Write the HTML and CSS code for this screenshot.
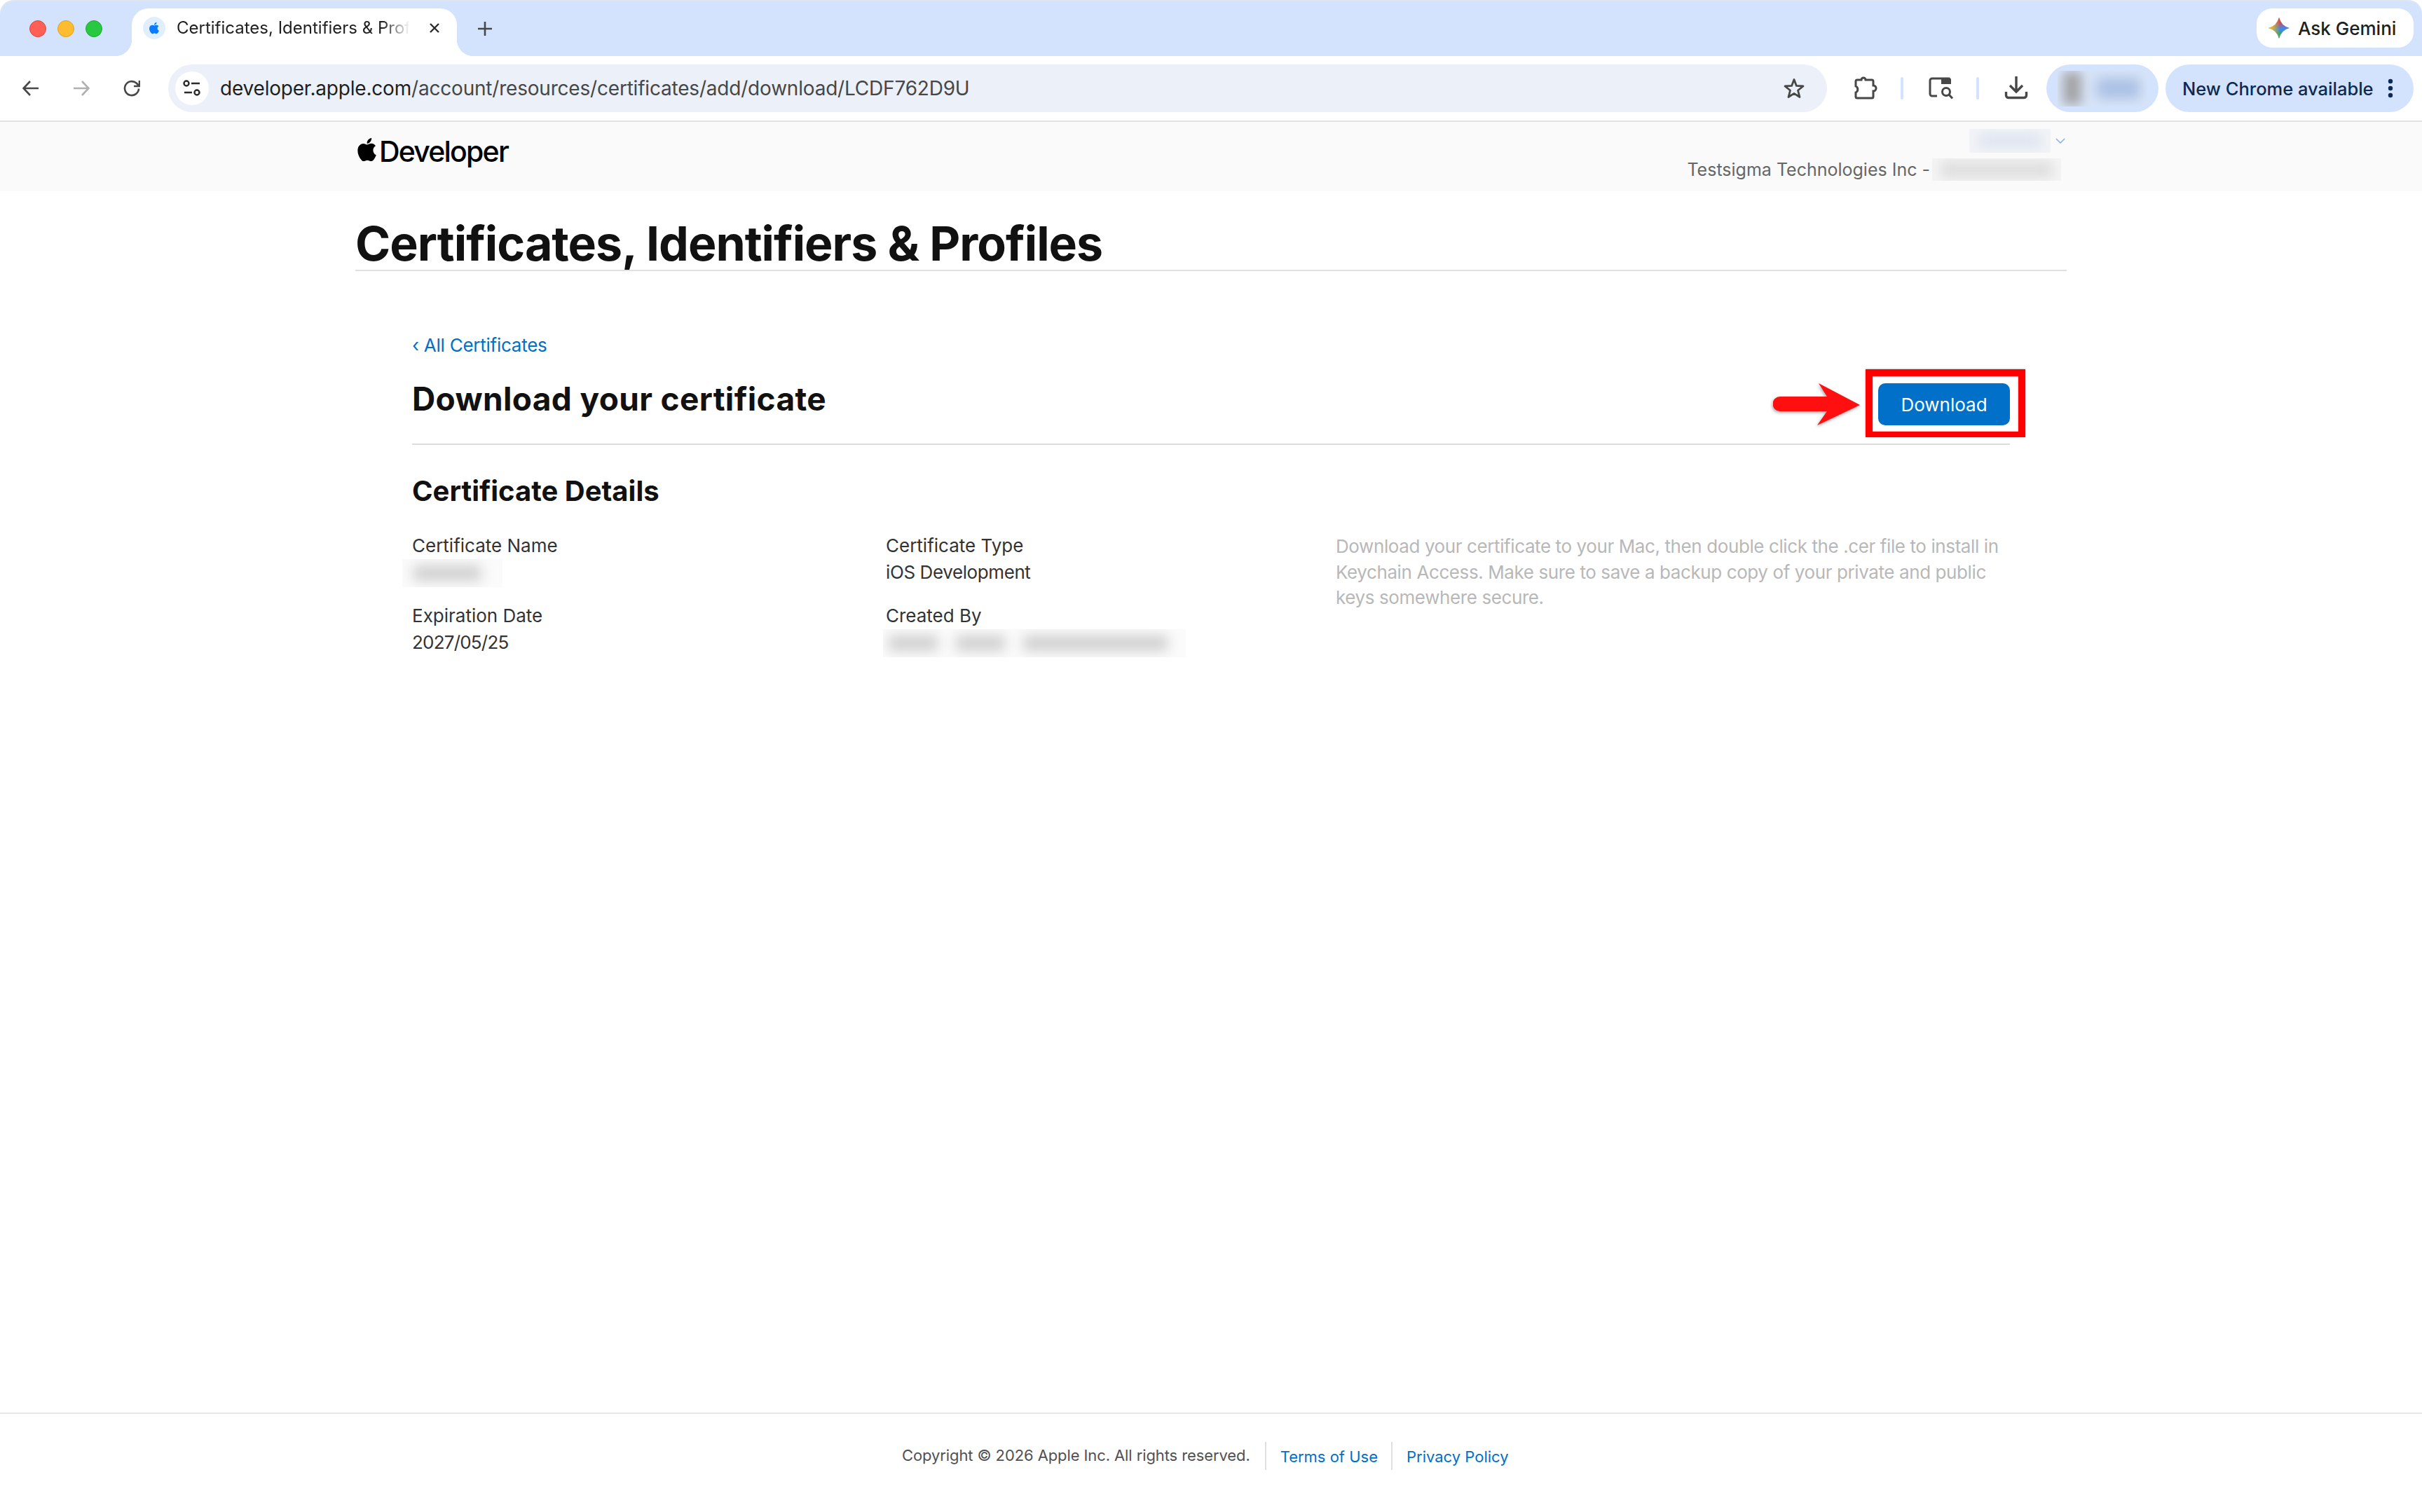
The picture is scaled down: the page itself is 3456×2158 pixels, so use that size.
FILE: index.html
```html
<!DOCTYPE html>
<html>
<head>
  <meta charset="UTF-8">
  <title>Certificates, Identifiers &amp; Profiles</title>
  <link rel="stylesheet" href="styles.css">
</head>
<body>
  <div class="window">
    <!-- Tab strip -->
    <div class="tabstrip">
      <div class="traffic">
        <span class="dot dot-red"></span>
        <span class="dot dot-yellow"></span>
        <span class="dot dot-green"></span>
      </div>
      <div class="tab">
        <span class="favicon">
          <svg viewBox="0 0 24 24" width="22" height="22"><path fill="#0a7cff" d="M17.05 20.28c-.98.95-2.05.8-3.08.35-1.09-.46-2.09-.48-3.24 0-1.44.62-2.2.44-3.06-.35C2.79 15.25 3.51 7.59 9.05 7.31c1.35.07 2.29.74 3.08.8 1.18-.24 2.31-.93 3.57-.84 1.51.12 2.65.72 3.4 1.8-3.12 1.87-2.38 5.98.48 7.13-.57 1.5-1.31 2.99-2.54 4.09zM12.03 7.25c-.15-2.23 1.66-4.07 3.74-4.25.29 2.58-2.34 4.5-3.74 4.25z"/></svg>
        </span>
        <span class="tab-title">Certificates, Identifiers &amp; Profiles</span>
        <svg class="tab-close" viewBox="0 0 16 16" width="16" height="16"><path d="M2 2 14 14M14 2 2 14" stroke="#2b2b2b" stroke-width="2.4" fill="none"/></svg>
      </div>
      <svg class="new-tab" viewBox="0 0 20 20" width="20" height="20"><path d="M10 0V20M0 10H20" stroke="#474747" stroke-width="2.6" fill="none"/></svg>
      <div class="gemini">
        <svg viewBox="0 0 30 30" width="30" height="30">
          <defs>
            <linearGradient id="gem-left" x1="0" y1="0" x2="1" y2="0">
              <stop offset="0.1" stop-color="#fbbc04"/>
              <stop offset="0.55" stop-color="#fbbc04" stop-opacity="0"/>
            </linearGradient>
            <linearGradient id="gem-top" x1="0" y1="0" x2="0" y2="1">
              <stop offset="0.15" stop-color="#ea4335"/>
              <stop offset="0.55" stop-color="#ea4335" stop-opacity="0"/>
            </linearGradient>
            <linearGradient id="gem-bottom" x1="0" y1="0" x2="0" y2="1">
              <stop offset="0.55" stop-color="#34a853" stop-opacity="0"/>
              <stop offset="0.85" stop-color="#34a853"/>
            </linearGradient>
          </defs>
          <path fill="#3a8bf7" d="M15 0Q18 12 30 15 18 18 15 30 12 18 0 15 12 12 15 0Z"/>
          <path fill="url(#gem-top)" d="M15 0Q18 12 30 15 18 18 15 30 12 18 0 15 12 12 15 0Z"/>
          <path fill="url(#gem-bottom)" d="M15 0Q18 12 30 15 18 18 15 30 12 18 0 15 12 12 15 0Z"/>
          <path fill="url(#gem-left)" d="M15 0Q18 12 30 15 18 18 15 30 12 18 0 15 12 12 15 0Z"/>
        </svg>
        <span>Ask Gemini</span>
      </div>
    </div>

    <!-- Toolbar -->
    <div class="toolbar">
      <div class="nav-btn">
        <svg viewBox="0 0 24 24" width="24" height="24"><path d="M23 12H2M11 2 1.500 12 11 22" stroke="#474747" stroke-width="2.600" fill="none"/></svg>
      </div>
      <div class="nav-btn">
        <svg viewBox="0 0 24 24" width="24" height="24"><path d="M1 12H22M13 2 22.500 12 13 22" stroke="#b0b0b0" stroke-width="2.600" fill="none"/></svg>
      </div>
      <div class="nav-btn">
        <svg viewBox="0 0 24 24" width="24" height="24"><path d="M22 12.500A10 10 0 1 1 18.500 4.500L22 8M23 1V9H15" stroke="#474747" stroke-width="2.600" fill="none"/></svg>
      </div>
      <div class="omnibox">
        <span class="site-info">
          <svg viewBox="0 0 26 24" width="26" height="24"><g stroke="#2b2b2b" stroke-width="2.400" fill="none"><circle cx="5" cy="5" r="3.500"/><path d="M12 5H24M2 18H13"/><circle cx="20" cy="18" r="3.500"/></g></svg>
        </span>
        <span class="url"><span class="url-host">developer.apple.com</span>/account/resources/certificates/add/download/LCDF762D9U</span>
        <svg class="bookmark" viewBox="0 0 32 32" width="32" height="32"><path d="M16 3.500 19.400 12.400 29 13 21.500 19 24 28.500 16 23.300 8 28.500 10.500 19 3 13 12.600 12.400Z" stroke="#474747" stroke-width="2.800" stroke-linejoin="round" fill="none"/></svg>
      </div>
      <div class="tool-icons">
        <svg viewBox="0 0 34 34" width="34" height="34"><path d="M4 5H10A3 3 0 0 1 16 5H25A2 2 0 0 1 27 7V13A4 4 0 0 1 27 21V29A2 2 0 0 1 25 31H4A2 2 0 0 1 2 29V23A5 5 0 0 0 2 14V7A2 2 0 0 1 4 5Z" stroke="#474747" stroke-width="3" fill="none"/></svg>
        <span class="tool-sep"></span>
        <svg viewBox="0 0 36 32" width="36" height="32"><path d="M12 27H5A3 3 0 0 1 2 24V5A3 3 0 0 1 5 2H30" stroke="#474747" stroke-width="3" fill="none"/><path d="M18 1H29A3 3 0 0 1 32 4V10H18Z" fill="#474747"/><circle cx="25" cy="21" r="5.500" stroke="#474747" stroke-width="3" fill="none"/><path d="M29 25 34 30.500" stroke="#474747" stroke-width="3"/></svg>
        <span class="tool-sep"></span>
        <svg viewBox="0 0 34 34" width="34" height="34"><path d="M17 0V22M8 13 17 22 26 13" stroke="#474747" stroke-width="3.400" fill="none"/><path d="M2.500 22V27A3.500 3.500 0 0 0 6 30.500H28A3.500 3.500 0 0 0 31.500 27V22" stroke="#474747" stroke-width="3.400" fill="none"/></svg>
      </div>
      <div class="profile-pill"><div class="redact-box"><span class="profile-face"></span><span class="profile-name"></span></div></div>
      <div class="update-pill">
        <span>New Chrome available</span>
        <svg viewBox="0 0 8 28" width="8" height="28"><g fill="#0b2a55"><circle cx="4" cy="4" r="3.200"/><circle cx="4" cy="14" r="3.200"/><circle cx="4" cy="24" r="3.200"/></g></svg>
      </div>
    </div>

    <!-- Site header -->
    <div class="site-header">
      <div class="site-header-inner">
        <div class="brand">
          <svg viewBox="4.200 3 15.500 17.900" width="27" height="33" preserveAspectRatio="none"><path d="M17.05 20.28c-.98.95-2.05.8-3.08.35-1.09-.46-2.09-.48-3.24 0-1.44.62-2.2.44-3.06-.35C2.79 15.25 3.51 7.59 9.05 7.31c1.35.07 2.29.74 3.08.8 1.18-.24 2.31-.93 3.57-.84 1.51.12 2.65.72 3.4 1.8-3.12 1.87-2.38 5.98.48 7.13-.57 1.5-1.31 2.99-2.54 4.09zM12.03 7.25c-.15-2.23 1.66-4.07 3.74-4.25.29 2.58-2.34 4.5-3.74 4.25z"/></svg>
          <span>Developer</span>
        </div>
        <div class="account">
          <div class="account-top">
            <div class="redact-light"><span class="redact-bar"></span></div>
            <svg viewBox="0 0 14 8" width="14" height="8"><path d="M1 1 7 7 13 1" stroke="#8fb0e0" stroke-width="1.600" fill="none"/></svg>
          </div>
          <div class="account-org">
            <span>Testsigma Technologies Inc -</span>
            <div class="redact-grey"><span class="redact-bar"></span></div>
          </div>
        </div>
      </div>
    </div>

    <!-- Page content -->
    <div class="main">
      <h1 class="page-title">Certificates, Identifiers &amp; Profiles</h1>
      <div class="content">
        <a class="back-link">‹ All Certificates</a>
        <div class="cert-head">
          <h2>Download your certificate</h2>
          <button class="download-btn">Download</button>
          <!-- Screenshot annotation -->
          <svg class="callout-arrow" viewBox="0 0 124 60" width="124" height="60"><path fill="#ff0f0f" d="M10 19H77L65 0 124 31 63 60 77 40H10A10.500 10.500 0 0 1 10 19Z"/></svg>
          <div class="callout-box"></div>
        </div>
        <h3>Certificate Details</h3>
        <div class="details">
          <div class="field">
            <div class="field-label">Certificate Name</div>
            <div class="redact-value name-value"><span class="redact-bar"></span></div>
          </div>
          <div class="field">
            <div class="field-label">Certificate Type</div>
            <div class="field-value">iOS Development</div>
          </div>
          <p class="details-note">Download your certificate to your Mac, then double click the .cer file to install in Keychain Access. Make sure to save a backup copy of your private and public keys somewhere secure.</p>
          <div class="field">
            <div class="field-label">Expiration Date</div>
            <div class="field-value date-value">2027/05/25</div>
          </div>
          <div class="field">
            <div class="field-label">Created By</div>
            <div class="redact-value creator-value">
              <span class="redact-bar bar-short"></span>
              <span class="redact-bar bar-short"></span>
              <span class="redact-bar bar-long"></span>
            </div>
          </div>
        </div>
      </div>
    </div>

    <!-- Footer -->
    <div class="footer">
      <span class="copyright">Copyright © 2026 Apple Inc. All rights reserved.</span>
      <a class="footer-link">Terms of Use</a>
      <a class="footer-link">Privacy Policy</a>
    </div>
  </div>
</body>
</html>
```
FILE: styles.css
```css
html, body {
  margin: 0;
  padding: 0;
  background: #fff;
}

body {
  font-family: Inter, "Liberation Sans", sans-serif;
  color: #1d1d1f;
}

.window {
  width: 3456px;
  height: 2158px;
  display: flex;
  flex-direction: column;
  overflow: hidden;
}

/* Tab strip */
.tabstrip {
  height: 80px;
  flex: none;
  display: flex;
  background: #d3e3fd;
  border-radius: 20px 20px 0 0;
  box-shadow: inset 0 2px 0 #dfe6f2;
}

.traffic {
  width: 188px;
  flex: none;
  display: flex;
  gap: 16px;
  padding: 29px 0 0 42px;
  box-sizing: border-box;
}

.dot {
  width: 24px;
  height: 24px;
  border-radius: 50%;
  box-sizing: border-box;
}

.dot-red { background: #ff5f57; border: 1px solid #e0443e; }
.dot-yellow { background: #febc2e; border: 1px solid #dfa023; }
.dot-green { background: #28c840; border: 1px solid #1dad2b; }

.tab {
  position: relative;
  width: 464px;
  flex: none;
  margin-top: 12px;
  height: 68px;
  background: #fff;
  border-radius: 24px 24px 0 0;
  display: flex;
  align-items: flex-start;
  padding: 12px 0 0 16px;
  box-sizing: border-box;
}

.tab::before,
.tab::after {
  content: "";
  position: absolute;
  bottom: 0;
  width: 24px;
  height: 24px;
}

.tab::before {
  left: -24px;
  background: radial-gradient(circle at 0 0, #d3e3fd 24px, #fff 24.5px);
}

.tab::after {
  right: -24px;
  background: radial-gradient(circle at 100% 0, #d3e3fd 24px, #fff 24.5px);
}

.favicon {
  width: 32px;
  height: 32px;
  flex: none;
  border-radius: 50%;
  background: #e0effe;
  display: flex;
  align-items: center;
  justify-content: center;
}

.tab-title {
  width: 333px;
  flex: none;
  margin-left: 16px;
  font-size: 24px;
  line-height: 32px;
  color: #1f1f1f;
  white-space: nowrap;
  overflow: hidden;
  -webkit-mask-image: linear-gradient(to right, #000 88%, transparent 100%);
}

.tab-close {
  flex: none;
  margin: 8px 0 0 27px;
}

.new-tab {
  margin: 31px 0 0 30px;
  flex: none;
}

.gemini {
  margin: 12px 12px 0 auto;
  width: 224px;
  height: 56px;
  background: #fff;
  border-radius: 22px;
  display: flex;
  align-items: center;
  gap: 12px;
  padding-left: 17px;
  box-sizing: border-box;
  font-size: 26px;
  font-weight: 500;
  color: #1f1f1f;
}

/* Toolbar */
.toolbar {
  height: 92px;
  flex: none;
  display: flex;
  align-items: center;
  padding-left: 8px;
  background: #fff;
  border-radius: 24px 24px 0 0;
  border-bottom: 2px solid #e1e1e1;
}

.nav-btn {
  width: 72px;
  flex: none;
  display: flex;
  justify-content: center;
}

.omnibox {
  width: 2367px;
  height: 68px;
  flex: none;
  margin-left: 16px;
  border-radius: 34px;
  background: #ebf0f9;
  display: flex;
  align-items: center;
  padding-left: 10px;
  box-sizing: border-box;
}

.site-info {
  width: 48px;
  height: 48px;
  flex: none;
  border-radius: 50%;
  background: #fff;
  display: flex;
  align-items: center;
  justify-content: center;
}

.url {
  margin-left: 16px;
  font-size: 28px;
  letter-spacing: -0.2px;
  color: #474747;
  white-space: nowrap;
}

.url-host {
  color: #1f1f1f;
}

.bookmark {
  margin-left: auto;
  margin-right: 31px;
  flex: none;
}

.tool-icons {
  width: 313px;
  flex: none;
  display: flex;
  align-items: center;
  padding-left: 39px;
  box-sizing: border-box;
}

.tool-sep {
  width: 4px;
  height: 32px;
  margin: 0 36px 0 32px;
  border-radius: 2px;
  background: #d3e3fd;
}

.profile-pill {
  width: 160px;
  height: 68px;
  flex: none;
  border-radius: 34px;
  background: #d3e3fd;
  display: flex;
  align-items: center;
  justify-content: center;
}

.redact-box {
  width: 128px;
  height: 51px;
  background: #d9e5f8;
  display: flex;
  overflow: hidden;
  align-items: center;
}

.profile-face {
  width: 26px;
  height: 46px;
  margin-left: 8px;
  background: #a3a3a6;
  filter: blur(8px);
}

.profile-name {
  width: 62px;
  height: 30px;
  margin-left: 22px;
  background: #aac0e4;
  filter: blur(9px);
}

.update-pill {
  width: 354px;
  height: 68px;
  flex: none;
  margin-left: 10px;
  border-radius: 34px;
  background: #d3e3fd;
  display: flex;
  align-items: center;
  padding-left: 24px;
  box-sizing: border-box;
  font-size: 25.500px;
  font-weight: 500;
  color: #0b2a55;
  white-space: nowrap;
}

.update-pill svg {
  margin-left: 20px;
}

/* Site header */
.site-header {
  height: 99px;
  flex: none;
  background: #fafafa;
}

.site-header-inner {
  width: 2442px;
  margin-left: 507px;
  display: flex;
  justify-content: space-between;
}

.brand {
  display: flex;
  align-items: flex-start;
  padding-top: 20px;
  font-size: 41px;
  font-weight: 500;
  letter-spacing: -1.800px;
  line-height: 44px;
  color: #000;
}

.brand svg {
  margin: 3px 4px 0 3px;
}

.account {
  display: flex;
  flex-direction: column;
  align-items: flex-end;
  padding-top: 10px;
}

.account-top {
  display: flex;
  align-items: center;
  gap: 7px;
  margin-right: 2px;
}

.redact-light {
  width: 116px;
  height: 34px;
  background: #f3f4f7;
  overflow: hidden;
  display: flex;
  align-items: center;
  justify-content: center;
}

.redact-light .redact-bar {
  width: 90px;
  height: 20px;
  background: #dce3f0;
}

.redact-bar {
  display: block;
  filter: blur(9px);
}

.account-org {
  display: flex;
  align-items: center;
  margin-top: 8px;
  margin-right: 8px;
  font-size: 25px;
  line-height: 32px;
  color: #666;
  white-space: nowrap;
}

.redact-grey {
  width: 184px;
  height: 32px;
  margin-left: 3px;
  background: #f5f5f5;
  overflow: hidden;
  display: flex;
  align-items: center;
  justify-content: center;
}

.redact-grey .redact-bar {
  width: 160px;
  height: 22px;
  background: #dcdcdc;
}

/* Main */
.main {
  flex: 1;
  width: 2442px;
  margin-left: 507px;
}

.page-title {
  margin: 0;
  height: 114px;
  box-sizing: border-box;
  padding-top: 36px;
  font-size: 68px;
  line-height: 76px;
  font-weight: 700;
  letter-spacing: -1px;
  color: #111;
  border-bottom: 2px solid #e0e0e0;
}

.content {
  width: 2280px;
  margin-left: 81px;
  padding-top: 89px;
}

.back-link {
  display: block;
  font-size: 26px;
  letter-spacing: -0.25px;
  line-height: 34px;
  color: #0070c9;
}

.cert-head {
  position: relative;
  display: flex;
  justify-content: space-between;
  align-items: flex-start;
  height: 125px;
  box-sizing: border-box;
  border-bottom: 2px solid #dcdcdc;
}

.cert-head h2 {
  margin: 34px 0 0;
  font-size: 46px;
  line-height: 50px;
  font-weight: 700;
  letter-spacing: 0.35px;
  color: #111;
}

.download-btn {
  width: 188px;
  height: 60px;
  margin-top: 37px;
  border: 0;
  border-radius: 10px;
  background: #0070c9;
  color: #fff;
  font-family: inherit;
  font-size: 26px;
  font-weight: 400;
}

.callout-arrow {
  position: absolute;
  left: 1942px;
  top: 37px;
  filter: drop-shadow(-1px 2px 2px rgba(0, 0, 0, 0.35));
}

.callout-box {
  position: absolute;
  left: 2074px;
  top: 17px;
  width: 228px;
  height: 97px;
  box-sizing: border-box;
  border: 10px solid #ff0000;
  border-bottom-width: 8px;
  box-shadow: 0 0 3px rgba(0, 0, 0, 0.3), inset 0 0 3px rgba(0, 0, 0, 0.3);
}

h3 {
  margin: 43px 0 0;
  font-size: 40px;
  line-height: 46px;
  font-weight: 700;
  color: #111;
}

.details {
  display: grid;
  grid-template-columns: 676px 642px 962px;
  grid-auto-rows: 76px;
  row-gap: 24px;
  margin-top: 36px;
  font-size: 26px;
  line-height: 38px;
}

.field-label {
  color: #333;
}

.field-value {
  color: #333;
  letter-spacing: -0.4px;
}

.date-value {
  letter-spacing: -0.8px;
}

.redact-value {
  height: 40px;
  overflow: hidden;
  display: flex;
  align-items: center;
  background: #fbfbfb;
}

.redact-value .redact-bar {
  height: 22px;
  background: #cfcfcf;
}

.name-value {
  width: 143px;
  margin-left: -14px;
  padding-left: 16px;
  box-sizing: border-box;
}

.name-value .redact-bar {
  width: 96px;
}

.creator-value {
  width: 432px;
  margin-left: -4px;
  padding-left: 8px;
  box-sizing: border-box;
  gap: 26px;
}

.bar-short {
  width: 70px;
}

.bar-long {
  width: 206px;
}

.details-note {
  grid-row: 1 / span 2;
  grid-column: 3;
  margin: 2px 0 0;
  color: #b8b8b8;
  letter-spacing: -0.4px;
  line-height: 36.500px;
}

/* Footer */
.footer {
  height: 142px;
  flex: none;
  box-sizing: border-box;
  border-top: 2px solid #e6e6e6;
  display: flex;
  align-items: flex-start;
  padding: 40px 0 0 1287px;
  font-size: 22px;
}

.copyright {
  color: #515154;
  letter-spacing: -0.1px;
  padding-right: 21px;
  line-height: 38px;
  white-space: nowrap;
}

.footer-link {
  height: 40px;
  line-height: 42px;
  padding: 0 19px 0 20px;
  color: #0070c9;
  border-left: 2px solid #e0e0e0;
  white-space: nowrap;
}
```
